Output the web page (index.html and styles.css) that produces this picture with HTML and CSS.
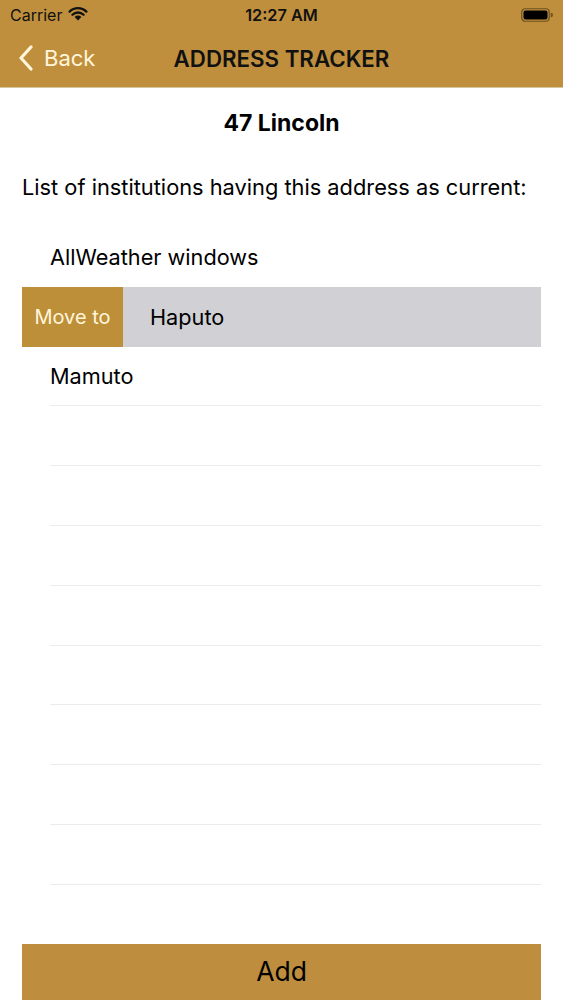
FILE: index.html
```html
<!DOCTYPE html>
<html>
<head>
<meta charset="utf-8">
<link rel="stylesheet" href="styles.css">
</head>
<body>
<div class="screen">
  <div class="header">
    <div class="status">
      <div class="status-left">
        <span class="carrier">Carrier</span>
        <svg class="wifi" width="20" height="15" viewBox="0 0 20 15">
          <path d="M10 14.5 L6.6 11 A4.8 4.8 0 0 1 13.4 11 Z" fill="#111"/>
          <path d="M4.4 8.8 A8 8 0 0 1 15.6 8.8" stroke="#111" stroke-width="2.3" fill="none" stroke-linecap="round"/>
          <path d="M1.6 5.6 A12 12 0 0 1 18.4 5.6" stroke="#111" stroke-width="2.3" fill="none" stroke-linecap="round"/>
        </svg>
      </div>
      <div class="time">12:27 AM</div>
      <div class="status-right">
        <svg width="32" height="14" viewBox="0 0 32 14">
          <rect x="0.75" y="0.75" width="27.5" height="12.5" rx="3.5" fill="none" stroke="#6b5220" stroke-width="1.2"/>
          <rect x="2.5" y="2.5" width="24" height="9" rx="2" fill="#000"/>
          <path d="M29.8 4.8 A2 2 0 0 1 29.8 9.2 Z" fill="#6b5220"/>
        </svg>
      </div>
    </div>
    <div class="nav">
      <div class="back">
        <svg width="16" height="26" viewBox="0 0 16 26">
          <path d="M13 2 L3 13 L13 24" stroke="#fff6dc" stroke-width="3.2" fill="none" stroke-linecap="round" stroke-linejoin="round"/>
        </svg>
        <span>Back</span>
      </div>
      <div class="title">ADDRESS TRACKER</div>
    </div>
  </div>

  <div class="address">47 Lincoln</div>
  <div class="caption">List of institutions having this address as current:</div>

  <div class="table">
    <div class="row"><span class="label">AllWeather windows</span></div>
    <div class="row selected">
      <div class="action">Move to</div>
      <span class="label">Haputo</span>
    </div>
    <div class="row sep"><span class="label">Mamuto</span></div>
    <div class="row sep"></div>
    <div class="row sep"></div>
    <div class="row sep"></div>
    <div class="row sep"></div>
    <div class="row sep"></div>
    <div class="row sep"></div>
    <div class="row sep"></div>
    <div class="row sep"></div>
  </div>

  <div class="add">Add</div>
</div>
</body>
</html>
```

FILE: styles.css
```css
* { box-sizing: border-box; }
html, body { margin: 0; padding: 0; background: #fff; }
body { font-family: Inter, "Liberation Sans", Arial, sans-serif; color: #000; }
.screen { width: 563px; height: 1000px; overflow: hidden; display: flex; flex-direction: column; }

.header { background: #bf8f3d; border-bottom: 1px solid #d8c79a; }
.status { height: 29px; display: flex; align-items: center; justify-content: space-between; padding: 0 10px 0 10px; position: relative; }
.status-left { display: flex; align-items: center; gap: 6px; font-size: 16px; color: #111; }
.wifi { margin-top: -2px; }
.time { position: absolute; left: 0; right: 0; text-align: center; font-size: 16.3px; font-weight: 600; color: #111; pointer-events: none; }
.status-right { display: flex; align-items: center; }

.nav { height: 58px; display: flex; align-items: center; position: relative; padding-left: 18px; }
.back { display: flex; align-items: center; gap: 10px; color: #fff6dc; font-size: 22px; }
.title { position: absolute; left: 0; right: 0; text-align: center; font-size: 22.3px; font-weight: 600; color: #111; }

.address { text-align: center; font-size: 23px; font-weight: 700; margin-top: 22px; height: 26px; line-height: 26px; }
.caption { font-size: 21.8px; margin: 38px 0 0 22px; line-height: 26px; }

.table { margin: 27px 22px 0 22px; display: flex; flex-direction: column; height: 718px; }
.row { height: 59.8px; display: flex; align-items: center; padding-left: 28px; font-size: 21.7px; flex: none; }
.row.sep { border-bottom: 1px solid #ececee; margin-left: 28px; padding-left: 0; }
.row.selected { background: #d1d0d5; padding-left: 0; }
.action { background: #be8f39; color: #fff6dc; width: 101px; height: 100%; display: flex; align-items: center; justify-content: center; font-size: 20px; margin-right: 27px; }

.add { margin: 0 22px; height: 56px; background: #be8e3e; display: flex; align-items: center; justify-content: center; font-size: 26.5px; padding-bottom: 2px; }
```
